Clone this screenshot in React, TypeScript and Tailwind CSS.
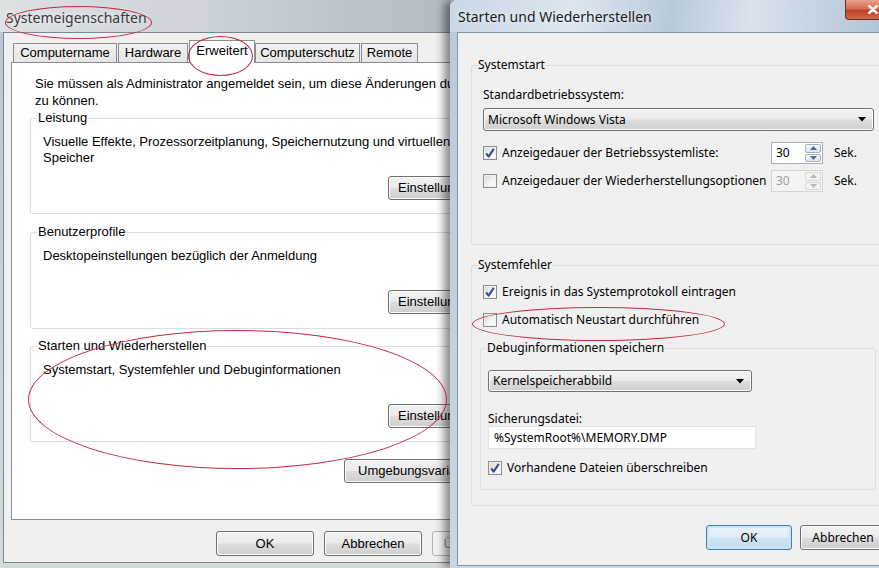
import type { ReactNode } from 'react'

const btn =
  'flex shrink-0 items-center rounded-[3px] border border-[#707070] bg-[linear-gradient(180deg,#f2f2f2_0%,#ebebeb_48%,#dddddd_52%,#cfcfcf_100%)] shadow-[inset_0_0_0_1px_#fbfbfb] whitespace-nowrap'

function Check({ checked }: { checked?: boolean }) {
  return (
    <span className="flex h-[14px] w-[14px] shrink-0 items-center justify-center border border-[#8e8f8f] bg-[linear-gradient(135deg,#d6d6d6_0%,#f6f6f6_60%,#ffffff_100%)] shadow-[inset_0_0_0_1px_#f0f0f0]">
      {checked && (
        <svg viewBox="0 0 12 12" className="h-[12px] w-[12px]">
          <path d="M2.2 6.4 L4.6 9.6 L9.8 1.8" fill="none" stroke="#3b4d92" strokeWidth="2.1" strokeLinejoin="round" />
        </svg>
      )}
    </span>
  )
}

function Arrow() {
  return (
    <svg viewBox="0 0 8 5" className="h-[5px] w-[8px]">
      <path d="M0 0 H8 L4 4.5 Z" fill="#000" />
    </svg>
  )
}

function Dropdown({ label, width }: { label: string; width: string }) {
  return (
    <div className={`${btn} ${width} justify-between pl-[4px] pr-[7px]`}>
      <span>{label}</span>
      <Arrow />
    </div>
  )
}

function Spin({ disabled }: { disabled?: boolean }) {
  const tri = disabled ? '#b8b8b8' : '#4c6a99'
  return (
    <div className={`flex h-[22px] w-[52px] shrink-0 border ${disabled ? 'border-[#d5d5d5] bg-[#f4f4f4]' : 'border-[#abadb3] bg-white'}`}>
      <div className={`flex-1 pl-[4px] leading-[20px] ${disabled ? 'text-[#9d9d9d]' : 'text-black'}`}>30</div>
      <div className="flex w-[18px] flex-col gap-[1px] p-[1px]">
        <div className={`flex flex-1 items-center justify-center rounded-[2px] border ${disabled ? 'border-[#d9d9d9] bg-[#f2f2f2]' : 'border-[#a9b2bd] bg-[linear-gradient(180deg,#f6f8fa,#dfe5eb)]'}`}>
          <svg viewBox="0 0 7 4" className="h-[4px] w-[7px]"><path d="M0 4 L3.5 0 L7 4 Z" fill={tri} /></svg>
        </div>
        <div className={`flex flex-1 items-center justify-center rounded-[2px] border ${disabled ? 'border-[#d9d9d9] bg-[#f2f2f2]' : 'border-[#a9b2bd] bg-[linear-gradient(180deg,#f6f8fa,#dfe5eb)]'}`}>
          <svg viewBox="0 0 7 4" className="h-[4px] w-[7px]"><path d="M0 0 H7 L3.5 4 Z" fill={tri} /></svg>
        </div>
      </div>
    </div>
  )
}

function Group({ title, className, children }: { title: string; className: string; children: ReactNode }) {
  return (
    <fieldset className={`rounded-[3px] border border-[#d5dfe5] ${className}`}>
      <legend className="ml-[-6px] px-[1px] leading-[16px]">{title}</legend>
      {children}
    </fieldset>
  )
}

const tabs = [
  { name: 'Computername', w: 'w-[104px]' },
  { name: 'Hardware', w: 'w-[70px]' },
  { name: 'Erweitert', w: 'w-[66px]', active: true },
  { name: 'Computerschutz', w: 'w-[105px]' },
  { name: 'Remote', w: 'w-[57px]' },
]

function LeftWindow() {
  return (
    <div className="h-[568px] w-[450px] shrink-0 overflow-hidden bg-[linear-gradient(180deg,#bcc5cd,#d3dade)] font-['Liberation_Sans',Arial,sans-serif] text-[13px] text-black">
      <div className="flex h-full w-[560px] flex-col">
        <div className="flex h-[32px] items-center bg-[linear-gradient(90deg,#dde1e5_0%,#cdd3d9_35%,#b8c0c8_70%,#a3abb3_100%)] pl-[6px] pt-[2px] font-['Noto_Sans',sans-serif] text-[14px] text-[#3a3a3a] [text-shadow:0_0_6px_#ffffff]">
          Systemeigenschaften
        </div>
        <div className="ml-[3px] flex h-[531px] flex-col border border-[#7c8590] bg-[#f0f0f0] pl-[7px] pt-[7px]">
          <div className="ml-[2px] flex h-[22px] items-end">
            {tabs.map((t) =>
              t.active ? (
                <div key={t.name} className={`relative z-10 -mb-px flex h-[23px] ${t.w} justify-center border border-b-0 border-[#898c95] bg-white pt-[2px] leading-[16px]`}>
                  {t.name}
                </div>
              ) : (
                <div key={t.name} className={`mr-px flex h-[19px] ${t.w} justify-center border border-b-0 border-[#898c95] bg-[linear-gradient(180deg,#f2f2f2,#e5e5e5)] pt-[1px] leading-[16px]`}>
                  {t.name}
                </div>
              ),
            )}
          </div>
          <div className="flex h-[458px] w-[530px] flex-col border border-[#898c95] bg-white pl-[18px]">
            <p className="pl-[5px] pt-[12px] leading-[17px]">
              Sie müssen als Administrator angemeldet sein, um diese Änderungen durchführen
              <br />
              zu können.
            </p>
            <Group title="Leistung" className="mt-[1px] w-[470px] pb-[13px] pl-[12px]">
              <p className="pt-[8px] leading-[16px]">
                Visuelle Effekte, Prozessorzeitplanung, Speichernutzung und virtuellen
                <br />
                Speicher
              </p>
              <div className={`${btn} ml-[345px] mt-[10px] h-[24px] px-[9px]`}>Einstellungen...</div>
            </Group>
            <Group title="Benutzerprofile" className="mt-[10px] w-[470px] pb-[14px] pl-[12px]">
              <p className="pt-[8px] leading-[16px]">Desktopeinstellungen bezüglich der Anmeldung</p>
              <div className={`${btn} ml-[345px] mt-[26px] h-[24px] px-[9px]`}>Einstellungen...</div>
            </Group>
            <Group title="Starten und Wiederherstellen" className="mt-[9px] w-[470px] pb-[13px] pl-[12px]">
              <p className="pt-[8px] leading-[16px]">Systemstart, Systemfehler und Debuginformationen</p>
              <div className={`${btn} ml-[345px] mt-[26px] h-[24px] px-[9px]`}>Einstellungen...</div>
            </Group>
            <div className={`${btn} ml-[314px] mt-[17px] h-[24px] w-fit px-[13px]`}>Umgebungsvariablen</div>
          </div>
          <div className="ml-[205px] mt-[11px] flex gap-[10px]">
            <div className={`${btn} h-[25px] w-[98px] justify-center`}>OK</div>
            <div className={`${btn} h-[25px] w-[98px] justify-center`}>Abbrechen</div>
            <div className="flex h-[25px] w-[98px] items-center justify-center rounded-[3px] border border-[#adb2b5] bg-[#f4f4f4] text-[#8a8a8a]">
              Übernehmen
            </div>
          </div>
        </div>
      </div>
    </div>
  )
}

function RightWindow() {
  return (
    <div className="relative z-10 h-[568px] w-[429px] shrink-0 overflow-hidden rounded-tl-[7px] bg-[linear-gradient(180deg,#b9cadb,#c9d6e3)] font-['Noto_Sans',sans-serif] text-[12px] text-black shadow-[-6px_0_9px_rgba(0,0,0,0.45)]">
      <div className="flex h-full w-[442px] flex-col">
        <div className="flex h-[32px] items-center justify-between bg-[linear-gradient(100deg,#c9d7e5_0%,#dde6ef_28%,#b8cada_50%,#d9e3ed_68%,#aec2d5_100%)]">
          <span className="pl-[8px] pt-[1px] text-[14px] text-[#1a1a1a] [text-shadow:0_0_6px_#ffffff]">Starten und Wiederherstellen</span>
          <div className="mb-auto mr-[4px] flex h-[20px] w-[43px] items-center justify-center rounded-b-[4px] border border-t-0 border-[#6f2a22] bg-[linear-gradient(180deg,#e7a08f_0%,#d56d56_45%,#c13d25_55%,#d26a45_100%)] pl-[12px]">
            <svg viewBox="0 0 10 9" className="h-[9px] w-[10px]">
              <path d="M1 1 L9 8 M9 1 L1 8" stroke="#fff" strokeWidth="2.4" strokeLinecap="round" />
            </svg>
          </div>
        </div>
        <div className="ml-[7px] flex h-[534px] flex-col border border-[#8094a8] bg-[#f0f0f0] pl-[13px] pt-[24px]">
          <Group title="Systemstart" className="w-[414px] pb-[52px] pl-[11px]">
            <div className="pt-[14px] leading-[16px]">Standardbetriebssystem:</div>
            <Dropdown label="Microsoft Windows Vista" width="mt-[5px] h-[23px] w-[391px]" />
            <div className="mt-[11px] flex items-center">
              <Check checked />
              <span className="ml-[5px] w-[269px] whitespace-nowrap">Anzeigedauer der Betriebssystemliste:</span>
              <Spin />
              <span className="ml-[11px]">Sek.</span>
            </div>
            <div className="mt-[6px] flex items-center">
              <Check />
              <span className="ml-[5px] w-[269px] whitespace-nowrap">Anzeigedauer der Wiederherstellungsoptionen</span>
              <Spin disabled />
              <span className="ml-[11px]">Sek.</span>
            </div>
          </Group>
          <Group title="Systemfehler" className="mt-[12px] w-[414px] pb-[15px] pl-[11px]">
            <div className="mt-[11px] flex h-[16px] items-center">
              <Check checked />
              <span className="ml-[5px]">Ereignis in das Systemprotokoll eintragen</span>
            </div>
            <div className="mt-[12px] flex h-[16px] items-center">
              <Check />
              <span className="ml-[5px]">Automatisch Neustart durchführen</span>
            </div>
            <fieldset className="ml-[-3px] mt-[12px] w-[396px] rounded-[3px] border border-[#d5dfe5] pb-[13px] pl-[7px]">
              <legend className="ml-[-2px] px-[1px] leading-[16px]">Debuginformationen speichern</legend>
              <Dropdown label="Kernelspeicherabbild" width="mt-[14px] h-[22px] w-[264px]" />
              <div className="mt-[19px] leading-[15px]">Sicherungsdatei:</div>
              <div className="flex h-[23px] w-[268px] items-center border border-[#e2e3ea] bg-white pl-[5px]">%SystemRoot%\MEMORY.DMP</div>
              <div className="mt-[11px] flex h-[16px] items-center">
                <Check checked />
                <span className="ml-[5px]">Vorhandene Dateien überschreiben</span>
              </div>
            </fieldset>
          </Group>
          <div className="ml-[235px] mt-[19px] flex gap-[8px]">
            <div className="flex h-[25px] w-[86px] items-center justify-center rounded-[3px] border border-[#3c7fb1] bg-[linear-gradient(180deg,#eaf4fb_0%,#e0edf8_48%,#cfe3f3_52%,#c5dcef_100%)] shadow-[inset_0_0_0_2px_#c6e6f8]">
              OK
            </div>
            <div className={`${btn} h-[25px] w-[86px] justify-center`}>Abbrechen</div>
          </div>
        </div>
      </div>
    </div>
  )
}

const marks = [
  'left-[5px] top-[6px] h-[33px] w-[147px]',
  'left-[188px] top-[36px] h-[40px] w-[65px]',
  'left-[28px] top-[330px] h-[139px] w-[419px]',
  'left-[472px] top-[307px] h-[34px] w-[253px]',
]

export default function App() {
  return (
    <div className="relative flex h-[568px] w-[879px] overflow-hidden bg-[#c4ccd4]">
      <LeftWindow />
      <RightWindow />
      <div className="pointer-events-none absolute inset-0 z-20">
        {marks.map((m) => (
          <div key={m} className={`absolute rounded-[50%] border border-[#c42a44] ${m}`} />
        ))}
      </div>
    </div>
  )
}
